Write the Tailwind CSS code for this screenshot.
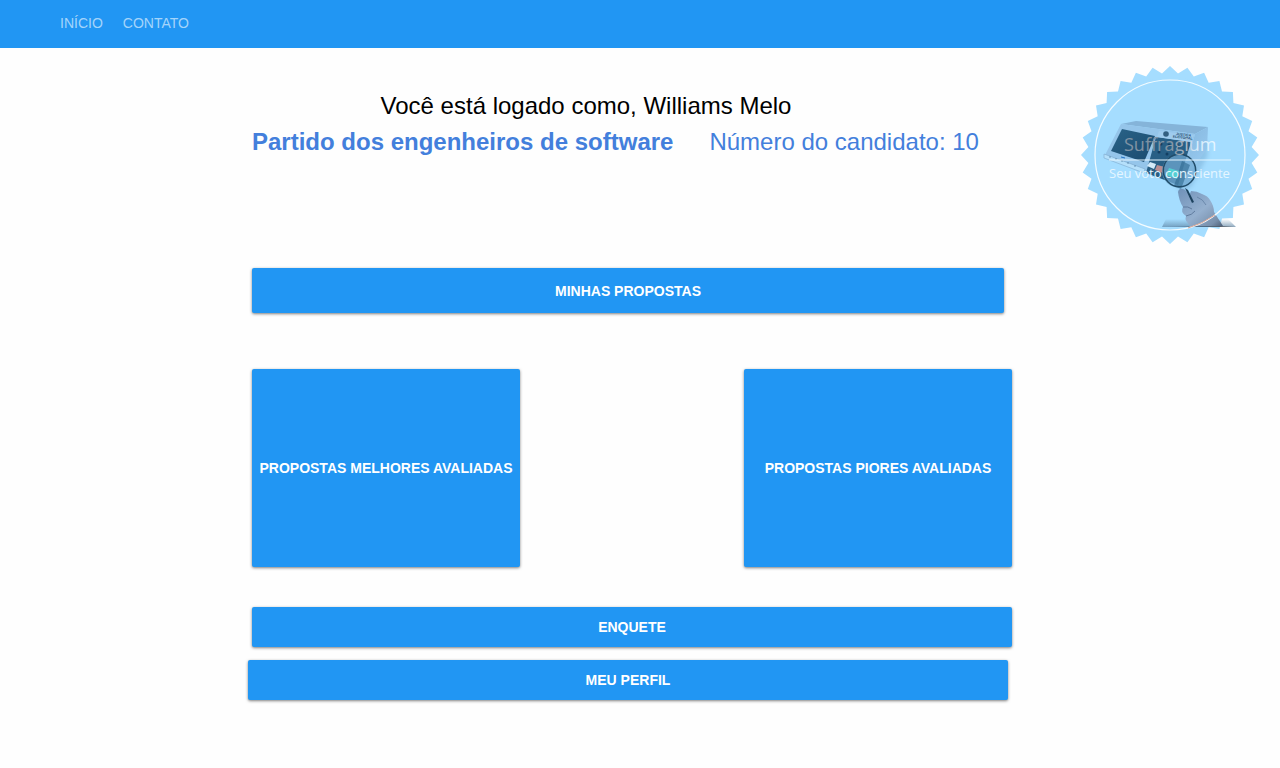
<!DOCTYPE html>
<html lang="pt-BR">
<head>
<meta charset="utf-8">
<meta name="viewport" content="width=device-width, initial-scale=1">
<title>Suffragium</title>
<script src="https://cdn.jsdelivr.net/npm/@tailwindcss/browser@4"></script>
</head>
<body class="min-h-screen bg-[#fefefe] font-['Liberation_Sans',Arial,sans-serif] text-black">
<header class="bg-[#2196f3]">
  <nav class="flex h-12 items-center gap-5 px-15 pb-0.5 text-sm text-white/60">
    <a href="#inicio">INÍCIO</a>
    <a href="#contato">CONTATO</a>
  </nav>
</header>
<div class="grid grid-cols-[1fr_minmax(0,760px)_1fr] pr-4">
  <main class="col-start-2 flex flex-col pt-10 text-sm font-bold text-white">
    <h1 class="pr-23 text-center text-2xl leading-9 font-normal text-black">Você está logado como, Williams Melo</h1>
    <div class="flex flex-wrap gap-x-9 text-2xl leading-9 font-normal text-[#437fdc]">
      <h2 class="font-bold">Partido dos engenheiros de software</h2>
      <p>Número do candidato: 10</p>
    </div>
    <button type="button" class="mt-27 mr-2 h-[45px] rounded-xs bg-[#2196f3] shadow-[0_1px_3px_rgba(0,0,0,0.5)]">MINHAS PROPOSTAS</button>
    <div class="mt-14 flex justify-between gap-4">
      <button type="button" class="h-[198px] w-[268px] rounded-xs bg-[#2196f3] shadow-[0_1px_3px_rgba(0,0,0,0.5)]">PROPOSTAS MELHORES AVALIADAS</button>
      <button type="button" class="h-[198px] w-[268px] rounded-xs bg-[#2196f3] shadow-[0_1px_3px_rgba(0,0,0,0.5)]">PROPOSTAS PIORES AVALIADAS</button>
    </div>
    <button type="button" class="mt-10 h-10 rounded-xs bg-[#2196f3] shadow-[0_1px_3px_rgba(0,0,0,0.5)]">ENQUETE</button>
    <button type="button" class="mt-[13px] mr-1 -ml-1 h-10 rounded-xs bg-[#2196f3] shadow-[0_1px_3px_rgba(0,0,0,0.5)]">MEU PERFIL</button>
  </main>
  <svg class="mt-[17px] mr-1 h-[180px] w-[180px] justify-self-end" viewBox="10 9 180 180" role="img" aria-label="Suffragium - Seu voto consciente">
    <defs>
      <path id="quarter" d="M0 0V-89L8-81.6 17.4-87.3 23.8-78.5 34.1-82.2 38.7-72.3 49.4-74 52-63.4 62.9-62.9 63.4-52 74-49.4 72.3-38.7 82.2-34.1 78.5-23.8 87.3-17.4 81.6-8 89 0Z"/>
      <linearGradient id="side" x1="0" y1="0" x2="0.6" y2="1"><stop offset="0" stop-color="#83b5dc"/><stop offset="1" stop-color="#9bcdf3"/></linearGradient>
      <linearGradient id="screen" x1="0" y1="0" x2="1" y2="1"><stop offset="0" stop-color="#2a6388"/><stop offset="1" stop-color="#1a4a6e"/></linearGradient>
      <linearGradient id="skin" x1="0" y1="0" x2="1" y2="1"><stop offset="0" stop-color="#6f91b8"/><stop offset="0.55" stop-color="#95b0cf"/><stop offset="0.85" stop-color="#7890ac"/><stop offset="1" stop-color="#4d6079"/></linearGradient>
      <linearGradient id="ink" gradientUnits="userSpaceOnUse" x1="54" y1="0" x2="144" y2="0"><stop offset="0" stop-color="#8093a4"/><stop offset="0.5" stop-color="#7f93a2"/><stop offset="0.68" stop-color="#a3b3c2"/><stop offset="0.78" stop-color="#d3eafa"/><stop offset="1" stop-color="#e6f6ff"/></linearGradient>
      <linearGradient id="ground" x1="0" y1="0" x2="1" y2="0"><stop offset="0" stop-color="#7298b8" stop-opacity="0"/><stop offset="0.5" stop-color="#4e6f8c"/><stop offset="0.8" stop-color="#565f6a"/><stop offset="1" stop-color="#777" stop-opacity="0"/></linearGradient>
      <linearGradient id="shade" x1="0" y1="0" x2="0" y2="1"><stop offset="0" stop-color="#5f86a6" stop-opacity="0"/><stop offset="1" stop-color="#5f86a6" stop-opacity=".7"/></linearGradient>
      <filter id="soft"><feGaussianBlur stdDeviation="2"/></filter>
    </defs>
    <g transform="translate(100 99)" fill="#a5ddff">
      <use href="#quarter"/><use href="#quarter" transform="rotate(90)"/><use href="#quarter" transform="rotate(180)"/><use href="#quarter" transform="rotate(270)"/>
      <circle r="78"/>
    </g>
    <path d="M105 129L136 85 138 99 122 130 112 137Z" fill="#77abd3" opacity=".5" filter="url(#soft)"/>
    <!-- voting machine -->
    <path d="M51 68L66 65 138 71 125 78Z" fill="#85b4d9"/>
    <path d="M125 78L138 71 137 93 110 130Z" fill="url(#side)"/>
    <path d="M51 68L125 78 110 130 75 116 34 101Z" fill="#95c5ea"/>
    <path d="M34 98L75 113 74 117 34 102Z" fill="#b5e0fb" stroke="#759fc3" stroke-width=".5"/>
    <path d="M40 100v2M46 102v2M52 104v2M58 106v2M65 109v2" stroke="#48779c" stroke-width=".7"/>
    <path d="M52 73L85 80 74 106 41 95Z" fill="url(#screen)"/>
    <path d="M86 81L121 86 108 129 76 117Z" fill="#285f85"/>
    <path d="M89 75L124 79 121 86 87 81Z" fill="#9fcbed"/>
    <circle cx="96" cy="78" r="2.8" fill="#335f80"/>
    <g fill="#143f62" font-family="Liberation Sans, sans-serif" font-weight="bold" font-size="3.500" transform="rotate(7 111 80)"><text x="106" y="79.500">JUSTIÇA</text><text x="103" y="82.500">ELEITORAL</text></g>
    <g fill="#143f62"><circle cx="91" cy="88" r="1.5"/><circle cx="99" cy="89" r="1.5"/><circle cx="108" cy="90" r="1.5"/><circle cx="89" cy="96" r="1.5"/><circle cx="97" cy="98" r="1.5"/><circle cx="106" cy="99" r="1.5"/></g>
    <path d="M80 106L86 108 84 113 77 110Z" fill="#d3eaf9"/>
    <path d="M87 109L95 111 93 117 85 114Z" fill="#b98d92"/>
    <path d="M51 101l4 1" stroke="#2071c5" stroke-width="1"/>
    <circle cx="108.500" cy="115" r="16.500" fill="#72abd3" opacity=".7"/>
    <path d="M104 130L111 133 120 109 112 105Z" fill="#2d678e" opacity=".6"/>
    <path d="M99 112L109 115 107 123 96 119Z" fill="#53cfd3"/>
    <!-- hand holding the magnifying glass -->
    <path d="M96 163H158L166 171H92Z" fill="url(#shade)"/>
    <path d="M94 170H165V171H94Z" fill="url(#ground)"/>
    <path d="M108 136Q109 132 113 133 117 134 119 140L121 135Q127 135 132 138 138 140 140 144 144 150 144 156L153 170H121Q114 165 116 160 110 156 113 151 109 145 108 136Z" fill="url(#skin)"/>
    <path d="M115 132L118 134 124 146 122 147Z" fill="#1d425e"/>
    <path d="M113 151q5-1 9 2M116 160q6-1 9-5" fill="none" stroke="#5a7698" stroke-width=".9"/>
    <path d="M127 141q6 2 9 8" fill="none" stroke="#6785a7" stroke-width=".9"/>
    <circle cx="109.500" cy="114.500" r="16.200" fill="none" stroke="#204c69" stroke-width="1.500"/>
    <circle cx="100" cy="99" r="75" fill="none" stroke="#f5fcff" stroke-width="1.200"/>
    <path d="M118 172Q132 168 145 159" fill="none" stroke="#d8a494" stroke-width="1"/>
    <path d="M39 104H161" stroke="#e6f6ff" stroke-width="1"/>
    <text x="54" y="95" fill="url(#ink)" font-family="Open Sans, sans-serif" font-size="18">Suffragium</text>
    <text x="39" y="122" fill="#e6f6ff" font-family="Open Sans, sans-serif" font-size="13">Seu voto consciente</text>
  </svg>
</div>
</body>
</html>
